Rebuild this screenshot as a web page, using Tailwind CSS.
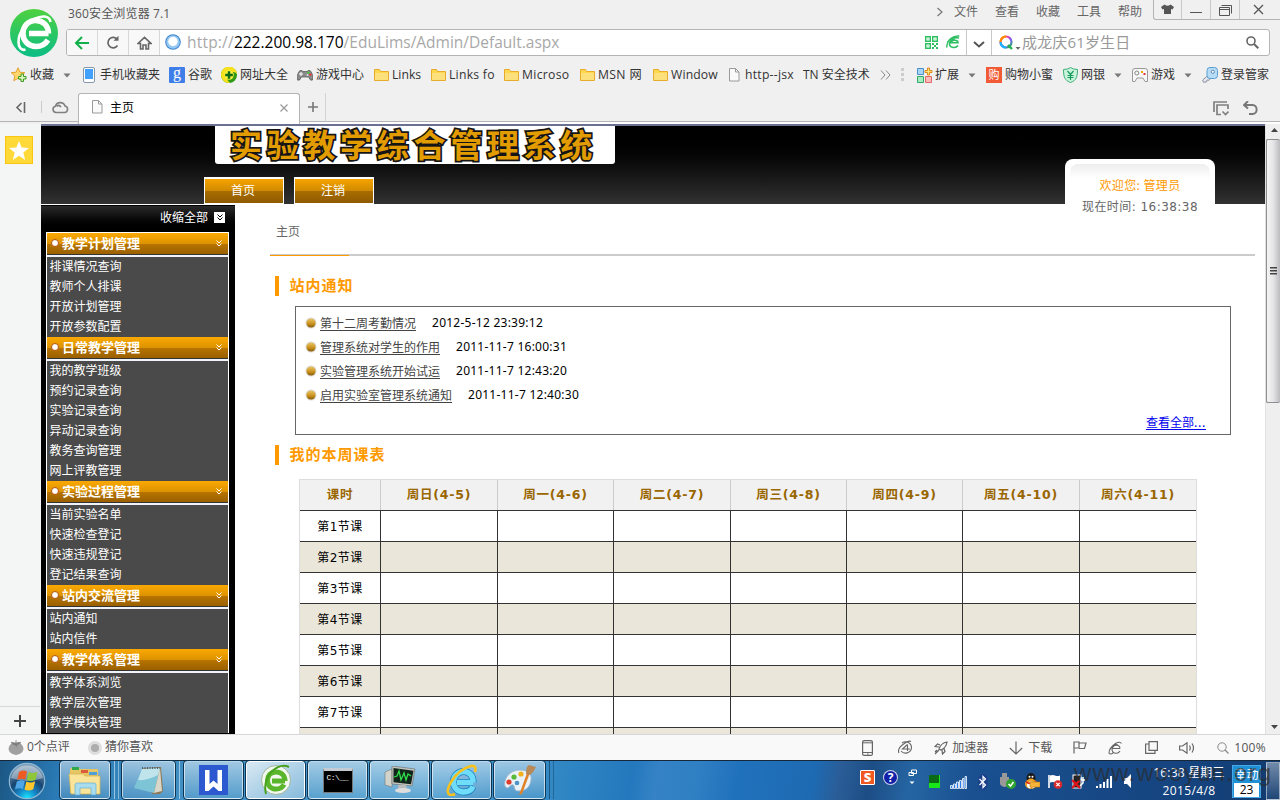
<!DOCTYPE html>
<html lang="zh-CN">
<head>
<meta charset="utf-8">
<title>主页</title>
<script src="https://cdn.jsdelivr.net/npm/@tailwindcss/browser@4"></script>
</head>
<body class="w-[1280px] h-[800px] overflow-hidden bg-[#f0f0f0] font-['Open_Sans','Noto_Sans_CJK_SC',sans-serif] text-[12px] leading-none text-[#333]">
<svg class="absolute w-0 h-0">
  <defs>
    <linearGradient id="gGreen" x1="0" y1="0" x2="0" y2="1"><stop offset="0" stop-color="#4ed13f"/><stop offset="1" stop-color="#0bbd86"/></linearGradient>
    <linearGradient id="gBall" x1="0" y1="0" x2="0" y2="1"><stop offset="0" stop-color="#e8c56c"/><stop offset=".5" stop-color="#d39a25"/><stop offset="1" stop-color="#8a5d08"/></linearGradient>
    <radialGradient id="gOrb" cx=".5" cy=".98" r=".9"><stop offset="0" stop-color="#19e8ff"/><stop offset=".3" stop-color="#1585c8"/><stop offset=".6" stop-color="#174470"/><stop offset="1" stop-color="#7f9fb8"/></radialGradient>
    <linearGradient id="gRainbow" x1="0" y1="0" x2="1" y2="1"><stop offset="0" stop-color="#f90"/><stop offset=".35" stop-color="#f33ca0"/><stop offset=".6" stop-color="#7a5cff"/><stop offset="1" stop-color="#22b14c"/></linearGradient>
    <symbol id="folder" viewBox="0 0 15 14"><path d="M.5 1.500h5l1 2h8v9h-14z" fill="#ffd84d" stroke="#e9ab2b"/><path d="M1 5h13v7H1z" fill="#fbe07c"/></symbol>
    <symbol id="page" viewBox="0 0 12 14"><path d="M1.500.5h6l3.500 3.500v9h-9.500z" fill="#fafafa" stroke="#9a9a9a"/><path d="M7.500.5v3.500h3.500" fill="none" stroke="#9a9a9a"/></symbol>
    <symbol id="caret" viewBox="0 0 8 5"><path d="M.5.5h7L4 4.500z" fill="#777"/></symbol>
    <symbol id="ball" viewBox="0 0 12 12"><circle cx="6" cy="6" r="5.500" fill="#d9d9d9"/><circle cx="6" cy="6" r="4.600" fill="url(#gBall)"/></symbol>
    <symbol id="dbl" viewBox="0 0 6 7"><path d="M.5.5L3 3 5.500.5M.5 3.500L3 6l2.500-2.500" fill="none" stroke="currentColor"/></symbol>
  </defs>
</svg>

<div class="flex flex-col w-[1280px] h-[800px]">
  <!-- browser chrome -->
  <header class="h-[93px] flex shrink-0">
    <div class="flex flex-col w-full">
      <div class="flex h-[57px]">
        <svg class="w-[48px] h-[48px] ml-[10px] mt-[9px] shrink-0" viewBox="0 0 48 48">
          <circle cx="24" cy="24" r="24" fill="url(#gGreen)"/>
          <path d="M38.500 24.500H19M38.500 24.500c0-8-5.500-13-13-13C18 11.500 13 17.500 13 24.500 13 32 18.500 37.500 26 37.500c5.500 0 9.500-2.500 12-6.500" fill="none" stroke="#fff" stroke-width="5.500"/>
          <path d="M40.500 13c-1-7-9-6.500-16.500-3C15 14.500 8.500 24 8.500 33c0 5 2.500 9 7 7.500" fill="none" stroke="#fff" stroke-width="2.600"/>
        </svg>
        <div class="ml-[8px] grow flex flex-col">
          <div class="flex h-[30px]">
            <span class="mt-[7px] ml-[2px] w-[200px] text-[#555] leading-[14px] tracking-[0.150px]">360安全浏览器 7.1</span>
            <div class="ml-auto flex">
              <svg class="w-[8px] h-[10px] mt-[7px] mr-[10px]" viewBox="0 0 8 10"><path d="M1.500 1L6 5 1.500 9" fill="none" stroke="#777" stroke-width="1.200"/></svg>
              <div class="flex gap-[17px] mt-[5px] text-[#666] leading-[14px]"><span>文件</span><span>查看</span><span>收藏</span><span>工具</span><span>帮助</span></div>
              <div class="ml-[11px] flex w-[127px] h-[20px] border-l border-b border-[#b4b4b4] rounded-bl-[3px]">
                <div class="w-[28px] border-r border-[#c8c8c8] flex justify-center"><svg class="w-[13px] h-[10px] mt-[4px]" viewBox="0 0 13 10"><path d="M3.500.5Q6.500 3 9.500.5L13 3l-1.500 2.500L10 5v5H3V5l-1.500.5L0 3z" fill="#555"/></svg></div>
                <div class="w-[29px] border-r border-[#c8c8c8] flex justify-center"><div class="w-[12px] h-[1px] mt-[12px] bg-[#555]"></div></div>
                <div class="w-[29px] border-r border-[#c8c8c8] flex justify-center"><svg class="w-[13px] h-[11px] mt-[5px]" viewBox="0 0 13 11"><path d="M2.500.5h10v8M.5 2.500h10v8H.5zM.5 4.500h10" fill="none" stroke="#555" stroke-width="1"/></svg></div>
                <svg class="w-[11px] h-[11px] mt-[4px] ml-[13px]" viewBox="0 0 11 11"><path d="M1 1l9 9M10 1l-9 9" stroke="#555" stroke-width="1.300"/></svg>
              </div>
            </div>
          </div>
          <div class="w-[1204px] h-[27px] mt-[-1px] flex border border-[#b4b4b4] rounded-[3px] bg-white overflow-hidden shrink-0">
            <div class="w-[31px] bg-[#f8f8f8] border-r border-[#d8d8d8] flex items-center justify-center"><svg class="w-[16px] h-[14px]" viewBox="0 0 16 14"><path d="M15 7H2M8 1L2 7l6 6" fill="none" stroke="#12b04a" stroke-width="2"/></svg></div>
            <div class="w-[31px] bg-[#f8f8f8] border-r border-[#d8d8d8] flex items-center justify-center"><svg class="w-[14px] h-[15px]" viewBox="0 0 14 15"><path d="M11.500 10.500A5.200 5.200 0 1 1 11.300 4.500" fill="none" stroke="#666" stroke-width="1.700"/><path d="M12.500.8v5H7.500z" fill="#666"/></svg></div>
            <div class="w-[31px] bg-[#f8f8f8] border-r border-[#d8d8d8] flex items-center justify-center"><svg class="w-[15px] h-[14px]" viewBox="0 0 15 14"><path d="M1 7.500L7.500 1.300 14 7.500h-2.500V13H9V9H6v4H3.500V7.500z" fill="none" stroke="#666" stroke-width="1.600"/></svg></div>
            <svg class="w-[16px] h-[16px] ml-[5px] mt-[4px] shrink-0" viewBox="0 0 16 16"><circle cx="8" cy="8" r="7.800" fill="#3f83cf"/><circle cx="8" cy="8" r="6.800" fill="#93c8f2"/><circle cx="8" cy="7.500" r="4.700" fill="#fff"/></svg>
            <div class="ml-[6px] w-[738px] leading-[25px] text-[15.500px] text-[#a8a8a8] whitespace-nowrap"><span class="tracking-[0.200px]">http://</span><span class="text-black">222.200.98.170</span><span>/EduLims/Admin/Default.aspx</span></div>
            <svg class="w-[13px] h-[13px] mt-[6px] shrink-0" viewBox="0 0 13 13"><path d="M.7.7h4.600v4.600H.7zM7.700.7h4.600v4.600H7.700zM.7 7.700h4.600v4.600H.7z" fill="none" stroke="#2ebf62" stroke-width="1.400"/><path d="M2.500 2.500h1v1h-1zM9.500 2.500h1v1h-1zM2.500 9.500h1v1h-1zM7 7h2v2H7zM11 7h2v2h-2zM9 9h2v2H9zM7 11h2v2H7zM11 11h2v2h-2z" fill="#2ebf62"/></svg>
            <svg class="w-[14px] h-[14px] mt-[5px] ml-[8px] shrink-0" viewBox="0 0 14 14"><path d="M12 7.700H5c.5-3.200 7-3.500 7 0zM12 10.500c-2 3-8 2.500-8.500-1C3 6 6 4.500 8.500 4.500" fill="none" stroke="#2ebf62" stroke-width="1.600"/><path d="M13.300 1C7 .5 1 4.500.7 12.500M13 3C9 2 4 3.500 1.500 7" fill="none" stroke="#2ebf62" stroke-width="1.400"/></svg>
            <div class="ml-[6px] w-[26px] border-x border-[#c8c8c8] flex items-center justify-center shrink-0"><svg class="w-[12px] h-[7px] mt-[3px]" viewBox="0 0 12 7"><path d="M1 1l5 4.500L11 1" fill="none" stroke="#555" stroke-width="2"/></svg></div>
            <svg class="w-[24px] h-[16px] ml-[6px] mt-[5px] shrink-0" viewBox="0 0 24 16"><circle cx="8" cy="7" r="5.500" fill="none" stroke="url(#gRainbow)" stroke-width="2.200"/><path d="M2.500 7A5.500 5.500 0 0 0 8 12.500" fill="none" stroke="#18b4ff" stroke-width="2.200"/><path d="M2.500 7A5.500 5.500 0 0 1 8 1.500" fill="none" stroke="#ff8a00" stroke-width="2.200"/><path d="M10 10l4 4" stroke="#22b14c" stroke-width="2.400"/><path d="M17.500 12h5L20 14.800z" fill="#666"/></svg>
            <span class="text-[15px] leading-[25px] text-[#999] w-[224px] tracking-[0.150px]">成龙庆61岁生日</span>
            <svg class="w-[13px] h-[13px] mt-[6px] shrink-0" viewBox="0 0 13 13"><circle cx="5" cy="5" r="4" fill="none" stroke="#666" stroke-width="1.600"/><path d="M8 8l4.300 4.300" stroke="#666" stroke-width="2"/></svg>
          </div>
        </div>
      </div>
      <!-- bookmarks bar -->
      <nav class="flex h-[36px] items-center pl-[11px] whitespace-nowrap text-[12px] text-[#333]">
        <div class="flex items-center w-[56px] gap-[3px]"><svg class="w-[16px] h-[16px]" viewBox="0 0 16 16"><path d="M7 .8l2 4.400 4.800.5-3.600 3.200 1 4.800L7 11.300l-4.200 2.400 1-4.800L.3 5.700l4.800-.5z" fill="#ffd76a" stroke="#e5a02c"/><path d="M10 7h2.500v2.500H15V12h-2.500v2.500H10V12H7.500V9.500H10z" fill="#d8f5c0" stroke="#3c9a1c"/></svg>收藏</div>
        <svg class="w-[8px] h-[5px] mr-[8px] ml-[-4px]"><use href="#caret"/></svg><span class="w-[4px]"></span>
        <div class="flex items-center w-[86px] gap-[5px]"><svg class="w-[12px] h-[16px]" viewBox="0 0 12 16"><rect x=".5" y=".5" width="11" height="15" rx="1.500" fill="#fff" stroke="#8597aa"/><path d="M2 2h8v10H2z" fill="#42a1ff"/></svg>手机收藏夹</div>
        <div class="flex items-center w-[52px] gap-[3px]"><div class="w-[16px] h-[16px] rounded-[1px] bg-[#3f7ee8] text-white text-center text-[16px] leading-[12px] font-['Liberation_Serif',serif]">g</div>谷歌</div>
        <div class="flex items-center w-[76px] gap-[3px]"><svg class="w-[16px] h-[16px]" viewBox="0 0 16 16"><circle cx="8" cy="8" r="8" fill="#2f9a14"/><path d="M0 8a8 8 0 0 1 16-1c-3-3-8-3-10 0s1 7 3 9A8 8 0 0 1 0 8z" fill="#f6e11b"/><circle cx="8" cy="8" r="4.800" fill="#f6ec3b"/><path d="M8 4.200v7.600M4.200 8h7.600" stroke="#0c6b13" stroke-width="2.400"/></svg>网址大全</div>
        <div class="flex items-center w-[77px] gap-[3px]"><svg class="w-[16px] h-[12px]" viewBox="0 0 16 12"><path d="M2 2.500Q4 0 6 2.500h4Q12 0 14 2.500 17 8 15.500 11q-2 1.500-4-3h-7q-2 4.500-4 3Q-1 8 2 2.500z" fill="#8a8a8a" stroke="#555" stroke-width=".7"/><path d="M4 3v4M2 5h4" stroke="#fff"/><circle cx="11.500" cy="3.800" r="1.200" fill="#4c4"/><circle cx="13.300" cy="5.600" r="1.200" fill="#e33"/><circle cx="10.500" cy="6" r="1" fill="#ddd"/></svg>游戏中心</div>
        <div class="flex items-center w-[57px] gap-[3px] text-[12.200px]"><svg class="w-[15px] h-[14px]"><use href="#folder"/></svg>Links</div>
        <div class="flex items-center w-[73px] gap-[3px] text-[12.200px]"><svg class="w-[15px] h-[14px]"><use href="#folder"/></svg><span class="tracking-[0.250px]">Links fo</span></div>
        <div class="flex items-center w-[76px] gap-[3px] text-[12.200px]"><svg class="w-[15px] h-[14px]"><use href="#folder"/></svg><span class="tracking-[0.300px]">Microso</span></div>
        <div class="flex items-center w-[73px] gap-[3px] text-[12.200px]"><svg class="w-[15px] h-[14px]"><use href="#folder"/></svg><span class="tracking-[0.350px]">MSN 网</span></div>
        <div class="flex items-center w-[75px] gap-[3px] text-[12.200px]"><svg class="w-[15px] h-[14px]"><use href="#folder"/></svg><span class="tracking-[0.150px]">Window</span></div>
        <div class="flex items-center w-[75px] gap-[5px] text-[12.200px]"><svg class="w-[12px] h-[14px]"><use href="#page"/></svg><span class="tracking-[0.250px]">http--jsx</span></div>
        <div class="w-[77px]">TN 安全技术</div>
        <svg class="w-[11px] h-[10px] mr-[10px]" viewBox="0 0 11 10"><path d="M1 .5L5 5 1 9.500M6 .5L10 5 6 9.500" fill="none" stroke="#888"/></svg>
        <svg class="w-[3px] h-[14px] mr-[13px]" viewBox="0 0 3 14"><path d="M0 0h3v3H0zM0 5h3v3H0zM0 10h3v3H0z" fill="#ccc"/></svg>
        <div class="flex items-center w-[51px] gap-[2px]"><svg class="w-[16px] h-[16px]" viewBox="0 0 16 16"><path d="M.5 1.500h6v6h-6z" fill="#a8d4f8" stroke="#4b90c8"/><path d="M.5 9.500h6v6h-6z" fill="#a5ecc0" stroke="#35a86a"/><path d="M8.500 9.500h6v6h-6z" fill="#fbb9b9" stroke="#dd6b6b"/><path d="M10.500 1h2v2.500H15v2h-2.500V8h-2V5.500H8v-2h2.500z" fill="#ffe27a" stroke="#e08a1c"/></svg>扩展</div>
        <svg class="w-[8px] h-[5px] mr-[10px]"><use href="#caret"/></svg>
        <div class="flex items-center w-[77px] gap-[3px]"><div class="w-[16px] h-[16px] bg-[#f05a35] text-white text-[11px] leading-[16px] text-center">购</div>购物小蜜</div>
        <div class="flex items-center w-[51px] gap-[3px]"><svg class="w-[15px] h-[16px]" viewBox="0 0 15 16"><path d="M7.500.5Q10 2.500 14.500 2.500c0 7-1 11-7 13-6-2-7-6-7-13Q5 2.500 7.500.5z" fill="#c8f3dc" stroke="#3fae78"/><path d="M4.500 4l3 3.500 3-3.500M7.500 7.500V13M4.500 8.500h6M4.500 10.500h6" fill="none" stroke="#189a5a" stroke-width="1.200"/></svg>网银</div>
        <svg class="w-[8px] h-[5px] mr-[10px]"><use href="#caret"/></svg>
        <div class="flex items-center w-[52px] gap-[3px]"><svg class="w-[16px] h-[14px]" viewBox="0 0 16 14"><path d="M3 .5h10a2.500 2.500 0 0 1 2.500 2.500v10.500H13L11 10H5l-2 3.500H.5V3A2.500 2.500 0 0 1 3 .5z" fill="#f7f7f7" stroke="#999"/><circle cx="4.800" cy="5" r="2" fill="none" stroke="#888"/><path d="M9 3h2v2H9z" fill="#f5a300"/><path d="M11.500 5h2v2h-2z" fill="#d33"/></svg>游戏</div>
        <svg class="w-[8px] h-[5px] mr-[10px]"><use href="#caret"/></svg>
        <div class="flex items-center gap-[3px]"><svg class="w-[16px] h-[16px]" viewBox="0 0 16 16"><path d="M6 8.500L.7 13l.8 2.300 3-.3L5 13l2 .3L9 11" fill="#e5e8ee" stroke="#8b93a3"/><rect x="5" y=".5" width="10.500" height="11" rx="3" fill="#b6dcf8" stroke="#5b9fd0"/><circle cx="10.800" cy="4.800" r="1.600" fill="#fff" stroke="#5b88b0"/></svg>登录管家</div>
      </nav>
    </div>
  </header>
  <!-- tab strip -->
  <div class="flex h-[31px] shrink-0">
    <div class="w-[78px] h-[29px] border-b border-[#b4b4b4] flex items-center">
      <svg class="w-[11px] h-[11px] ml-[15px] mt-[1px]" viewBox="0 0 11 11"><path d="M6.500 1L2 5.500 6.500 10M9.500 0v11" fill="none" stroke="#666" stroke-width="1.600"/></svg>
      <div class="w-px h-[12px] bg-[#ccc] ml-[15px]"></div>
      <svg class="w-[17px] h-[14px] ml-[10px]" viewBox="0 0 17 14"><path d="M4 12.500a3.200 3.200 0 0 1-.5-6.300A5 5 0 0 1 13 6a3.300 3.300 0 0 1-.5 6.500zM5 6.500Q6.500 4 9 7" fill="none" stroke="#808080" stroke-width="1.600"/></svg>
    </div>
    <div class="w-[222px] h-[31px] bg-white border border-b-0 border-[#b4b4b4] rounded-t-[3px] flex pt-[6px]">
      <svg class="w-[12px] h-[14px] ml-[12px]"><use href="#page"/></svg>
      <span class="ml-[7px] w-[170px] leading-[15px] text-black">主页</span>
      <svg class="w-[8px] h-[8px] mt-[4px]" viewBox="0 0 8 8"><path d="M.5.5l7 7M7.500.5l-7 7" stroke="#999" stroke-width="1.200"/></svg>
    </div>
    <div class="w-[26px] h-[31px] bg-white"><div class="h-[29px] bg-[#f0f0f0] border-b border-[#b4b4b4] border-r border-r-[#d4d4d4]"><svg class="w-[10px] h-[29px] ml-[8px]" viewBox="0 0 10 29"><path d="M5 9v10M0 14h10" stroke="#777" stroke-width="1.600"/></svg></div></div>
    <div class="grow h-[31px] bg-white"><div class="h-[29px] bg-[#f0f0f0] border-b border-[#b4b4b4] flex justify-end pr-[22px] pt-[8px] gap-[14px]">
      <svg class="w-[16px] h-[15px]" viewBox="0 0 16 15"><path d="M1 11V1h13M8 13.500H4V4h11v4M9.500 10.500l3 3 3-3" fill="none" stroke="#808080" stroke-width="1.700"/></svg>
      <svg class="w-[15px] h-[14px]" viewBox="0 0 15 14"><path d="M1 4h8.500c5.500 0 5.500 9 0 9H6M5 0L1 4l4 3.500" fill="none" stroke="#777" stroke-width="1.900"/></svg>
    </div></div>
  </div>

  <!-- viewport -->
  <div class="flex h-[610px] shrink-0 bg-white overflow-hidden">
    <aside class="w-[41px] bg-[#f4f6f5] flex flex-col justify-between">
      <div class="w-[28px] h-[28px] ml-[5px] mt-[12px] bg-[#ffd938] border border-[#fcc512] flex items-center justify-center"><svg class="w-[20px] h-[19px]" viewBox="0 0 20 19"><path d="M10 0l2.600 6.600 7.400.4-5.700 4.600L16.200 19 10 14.700 3.800 19l1.900-7.400L0 7l7.400-.4z" fill="#fff"/></svg></div>
      <div class="h-[28px] w-[40px] border-t border-[#d8d8d8] flex justify-center items-center"><svg class="w-[12px] h-[12px]" viewBox="0 0 12 12"><path d="M6 0v12M0 6h12" stroke="#444" stroke-width="2"/></svg></div>
    </aside>
    <main class="w-[1224px] font-['Noto_Sans_CJK_SC',sans-serif]">
      <!-- site header -->
      <div class="h-[80px] border-t-2 border-[#6a7191] bg-linear-to-b from-black to-[#323232] flex justify-between">
        <div class="ml-[163px] flex flex-col justify-between">
          <div class="ml-[11px] w-[400px] h-[38px] bg-white rounded-b-[3px] pl-[15px] text-[32px] leading-[35px] font-bold tracking-[4.700px] text-[#e29c00] whitespace-nowrap [-webkit-text-stroke:3.500px_#151515] [paint-order:stroke_fill]">实验教学综合管理系统</div>
          <div class="flex gap-[10px] text-white text-center">
            <div class="w-[80px] h-[27px] border border-white border-t-2 bg-[linear-gradient(#f6a300,#cf8a00_50%,#a86c00_52%,#8f5b00)] leading-[22px] pr-[2px]">首页</div>
            <div class="w-[80px] h-[27px] border border-white border-t-2 bg-[linear-gradient(#f6a300,#cf8a00_50%,#a86c00_52%,#8f5b00)] leading-[22px] pr-[2px]">注销</div>
          </div>
        </div>
        <div class="mr-[50px] mt-[33px] w-[150px] h-[62px] relative bg-white rounded-t-[8px] pt-[5px] px-[5px]">
          <div class="h-[14px] rounded-t-[8px] bg-linear-to-b from-[#eeeeee] to-white"></div>
          <div class="text-center text-[#f90] leading-[14px] tracking-[0.400px]">欢迎您: 管理员</div>
          <div class="text-center text-[#666] leading-[14px] mt-[8px] mx-[-5px] tracking-[0.450px] font-['DejaVu_Sans','Noto_Sans_CJK_SC',sans-serif]">现在时间: 16:38:38</div>
        </div>
      </div>
      <div class="flex">
        <!-- side menu -->
        <div class="w-[194px] h-[529px] mt-px bg-black px-[5px] shrink-0 overflow-hidden">
          <div class="h-[27px] mx-[-5px] px-[10px] bg-linear-to-b from-[#2a2a2a] to-black border-t border-black flex justify-end text-white leading-[22px] gap-[6px]">收缩全部<span class="w-[11px] h-[11px] mt-[6px] bg-white text-black flex items-center justify-center"><svg class="w-[6px] h-[7px]"><use href="#dbl"/></svg></span></div>
          <div id="menu" class="border-x border-t border-white w-[183px]"></div>
        </div>
        <!-- content -->
        <div class="w-[1030px] pl-[35px]">
          <div class="h-[50px] pt-[19px] pl-[6px] leading-[15px] text-[#666]">主页</div>
          <div class="w-[985px] h-[2px] bg-[#ccc] flex items-end"><div class="w-[79px] h-px bg-[#f90]"></div></div>
          <h2 class="mt-[20px] ml-[5px] h-[20px] border-l-4 border-[#f90] pl-[10.500px] text-[15px] leading-[18px] font-bold text-[#f90] tracking-[1px]">站内通知</h2>
          <div class="mt-[10px] ml-[25px] w-[936px] h-[129px] border border-[#666] pt-[4px] pl-[9px]">
            <ul id="notices"></ul>
            <div class="mt-[8px] pr-[24px] text-right leading-[14px]"><a class="text-[#0000ee] underline underline-offset-2">查看全部<span class="tracking-[0.700px]">...</span></a></div>
          </div>
          <h2 class="mt-[10px] ml-[5px] h-[20px] border-l-4 border-[#f90] pl-[10.500px] text-[15px] leading-[18px] font-bold text-[#f90] tracking-[1px]">我的本周课表</h2>
          <div id="timetable" class="mt-[14px] ml-[29px] w-[898px] border border-b-0 border-[#ddd]"></div>
        </div>
      </div>
    </main>
    <!-- scrollbar -->
    <div class="w-[15px] bg-[#efefef] border-l border-[#e2e2e2] flex flex-col items-center">
      <svg class="w-[7px] h-[4px] mt-[4px] mb-[7px] ml-[2px] shrink-0" viewBox="0 0 7 4"><path d="M0 4L3.500 0 7 4z" fill="#444"/></svg>
      <div class="w-[14px] h-[264px] rounded-[2px] border border-[#8e8f92] border-r-0 bg-linear-to-r from-[#f5f5f5] via-[#e4e4e6] to-[#bcbcc0] flex items-center justify-center shrink-0"><svg class="w-[7px] h-[8px]" viewBox="0 0 7 8"><path d="M0 .8h7M0 3.800h7M0 6.800h7" stroke="#444" stroke-width="1.400"/></svg></div>
      <svg class="w-[7px] h-[4px] mt-auto mb-[5px] ml-[2px] shrink-0" viewBox="0 0 7 4"><path d="M0 0h7L3.500 4z" fill="#444"/></svg>
    </div>
  </div>

  <!-- status bar -->
  <div class="h-[26px] shrink-0 border-t border-[#d8d8d8] bg-[#f9f9f9] flex items-center text-[#555] leading-[14px]">
    <svg class="w-[16px] h-[15px] ml-[8px]" viewBox="0 0 16 15"><ellipse cx="8" cy="8.700" rx="7.500" ry="6.200" fill="#a0a0a0"/><path d="M8 0v3M3 2.500q3 0 5 1 2-1.500 5-1-2 1.800-4 2L8.500 6.500 7 4.700Q4.500 4.500 3 2.500z" fill="#7d7d7d" stroke="#7d7d7d" stroke-width=".8"/></svg>
    <span class="ml-[3px] w-[61px] mt-[-1px]">0个点评</span>
    <div class="w-[14px] h-[14px] rounded-full bg-[#adadad] border-[3px] border-[#dedede]"></div>
    <span class="ml-[3px] mt-[-2px]">猜你喜欢</span>
    <div class="ml-auto flex items-center pr-[14px]">
      <svg class="w-[11px] h-[16px] mr-[25px]" viewBox="0 0 11 16"><rect x=".6" y=".6" width="9.800" height="14.800" rx="1.500" fill="none" stroke="#666" stroke-width="1.200"/><path d="M1 2.800h9M1 12.500h9M5 14h1.500" stroke="#666"/></svg>
      <svg class="w-[15px] h-[15px] mr-[21px]" viewBox="0 0 15 15"><path d="M4 3A6 6 0 0 1 13.500 8 6 6 0 0 1 3 11M1 13Q-1 9 5 4.500T13 1.500M9.500 4.500v6.500M9.500 4.500L4.500 9H12" fill="none" stroke="#666" stroke-width="1.100"/></svg>
      <svg class="w-[14px] h-[14px] mr-[4px]" viewBox="0 0 14 14"><path d="M5 8Q7 2 13 1q-1 6-6 8zM5 6L1 5.500 3.500 3 6 4M8 9l.5 4 2.500-2.500L10 7.500M5 9l-4 4M3 9l-2 2" fill="none" stroke="#666" stroke-width="1.200"/></svg>
      <span class="w-[57px]">加速器</span>
      <svg class="w-[14px] h-[14px] mr-[5px]" viewBox="0 0 14 14"><path d="M7 .5V13M.8 7L7 13l6.200-6" fill="none" stroke="#666" stroke-width="1.200"/></svg>
      <span class="w-[45px]">下载</span>
      <svg class="w-[14px] h-[13px] mr-[21px]" viewBox="0 0 14 13"><path d="M1 12.500V1h5v6H1M6 2h7l-1.500 5.500H6" fill="none" stroke="#666" stroke-width="1.200"/></svg>
      <svg class="w-[15px] h-[14px] mr-[22px]" viewBox="0 0 15 14"><path d="M12 7.500H4.500C5 3.500 12 3 12 7.500M12 10c-2 3.500-8 3-8-2C4 4 8 3 10 4M13.500 2.500Q12 0 7.500 2.500 1 7 1 12q1.500 2 4 0" fill="none" stroke="#666" stroke-width="1.100"/></svg>
      <svg class="w-[13px] h-[13px] mr-[21px]" viewBox="0 0 13 13"><path d="M4 .6h8.400v8.800H4zM4 3H.6v9.400H10V9.500" fill="none" stroke="#666" stroke-width="1.200"/></svg>
      <svg class="w-[16px] h-[12px] mr-[22px]" viewBox="0 0 16 12"><path d="M.6 4h3L8 .8v10.400L3.600 8h-3zM10.500 3.500q1.500 2.500 0 5M13 1.500q3 4.500 0 9" fill="none" stroke="#666" stroke-width="1.200"/></svg>
      <svg class="w-[12px] h-[12px] mr-[5px]" viewBox="0 0 12 12"><circle cx="5" cy="5" r="4.200" fill="none" stroke="#888"/><path d="M8 8l3.500 3.500" stroke="#888" stroke-width="1.200"/></svg>
      <span class="tracking-[0.300px]">100%</span>
    </div>
  </div>

  <!-- taskbar -->
  <footer class="h-[40px] shrink-0 relative border-t border-[#16283a] bg-[linear-gradient(100deg,#1b5784_0px,#2a7ab5_60px,#3f8fc4_180px,#4b9cce_420px,#2f86c3_560px,#2478bd_625px,#3583c6_650px,#2f7fc3_690px,#2071bc_730px,#1e6ab2_805px,#2a5d97_830px,#1d4d85_860px,#2565a3_900px,#1a5090_960px,#15437e_1180px,#123a6b_1280px)] flex items-start">
    <svg class="w-[38px] h-[38px] ml-[8px] mt-px shrink-0" viewBox="0 0 38 38"><circle cx="19" cy="19" r="17.700" fill="url(#gOrb)" stroke="#8fb8d4" stroke-width="1.200"/><path d="M3 16a16.500 16.500 0 0 1 32 0Q19 22 3 16z" fill="#fff" opacity=".38"/><path d="M11 10q4-2.500 8-.5l-1.800 8q-4-1.700-8 .6z" fill="#ee5b22"/><path d="M20.500 10q4 2 9-.3l-1.900 8q-4.500 2.300-8.900.3z" fill="#8fc73a"/><path d="M8.800 19.500q4-2.300 8-.5L15 27q-4-1.800-8 .5z" fill="#4ea6e6"/><path d="M18.300 19.500q4.400 2 8.900-.3l-1.900 8q-4.400 2.300-8.800.3z" fill="#fcc62c"/></svg>
    <div class="ml-[14px] flex">
      <div class="flex w-[62px]"><div class="w-[50px] h-[38px] rounded-[3px] border border-white/60 outline outline-[#0d3553] bg-linear-to-b from-white/50 to-white/10 flex items-center justify-center"><svg class="w-[34px] h-[32px]" viewBox="0 0 34 32"><path d="M2 5l3-2h6l1 2h18v24H2z" fill="#e6c665"/><path d="M4 3h7v3H4z" fill="#2fa84e"/><path d="M13 6h7v3h-7z" fill="#dc5b3b"/><path d="M21 8h8v3h-8z" fill="#4c9fd8"/><path d="M1 10h14l2 2h15v18H3z" fill="#f9e49a" stroke="#d5b14c" stroke-width=".7"/><path d="M7 31V21q0-2 2-2h17q2 0 2 2v10h-5v-7H12v7z" fill="#a5dcf2" opacity=".95" stroke="#62aed6" stroke-width=".7"/></svg></div><div class="w-[4px] h-[38px] border-r border-white/50 ml-px"></div><div class="w-[3px] h-[38px] border-r border-white/40 ml-px"></div></div>
      <div class="flex w-[62px]"><div class="w-[53px] h-[38px] rounded-[3px] border border-white/60 outline outline-[#0d3553] bg-linear-to-b from-white/50 to-white/10 flex items-center justify-center"><svg class="w-[32px] h-[30px]" viewBox="0 0 32 30"><path d="M10 3l18-1 2 24-3 3H19z" fill="#8d7853"/><path d="M9 4l18-1-6 25L1 23z" fill="#7cc4d6"/><path d="M9 4l18-1-2 7Q14 16 5 15z" fill="#bfe4ec"/><path d="M27 3l2 23-8 2z" fill="#d9d7c9"/><path d="M9 3h18" stroke="#4f5f65" stroke-width="2" stroke-dasharray="1 1.500"/></svg></div><div class="w-[4px] h-[38px] border-r border-white/50 ml-px"></div></div>
      <div class="w-[62px]"><div class="w-[59px] h-[38px] rounded-[3px] border border-white/60 outline outline-[#0d3553] bg-linear-to-b from-white/50 to-white/10 flex items-center justify-center"><svg class="w-[29px] h-[30px]" viewBox="0 0 29 30"><path d="M0 0h29v30H0z" fill="#2c59cf"/><path d="M6 5h4.500v14l4-3.500 4 3.500V5H23v21h-3.500l-5-4.500-5 4.500H6z" fill="#fff"/></svg></div></div>
      <div class="w-[62px]"><div class="w-[59px] h-[38px] rounded-[3px] border border-white outline outline-[#0d3553] bg-linear-to-br from-white/80 to-white/35 flex items-center justify-center"><svg class="w-[30px] h-[32px]" viewBox="0 0 30 32"><circle cx="15" cy="16" r="14.500" fill="#f2f8f0" stroke="#9fb89a"/><path d="M24 17H11M24 17c0-6-4-9-9-9-5.500 0-8.500 4-8.500 8.500 0 5 3.500 8.500 8.500 8.500 4 0 6.500-1.500 8-4.500" fill="none" stroke="#59b52b" stroke-width="5"/><path d="M28 3Q20-1 10 8 2 18 5 30" fill="none" stroke="#47a21f" stroke-width="2"/></svg></div></div>
      <div class="w-[62px]"><div class="w-[59px] h-[38px] rounded-[3px] border border-white/60 outline outline-[#0d3553] bg-linear-to-b from-white/50 to-white/10 flex items-center justify-center"><div class="w-[30px] h-[25px] border border-[#777] border-t-[3px] border-t-[#c5cbd2] bg-black text-white font-['Liberation_Mono',monospace] text-[8px] leading-[12px] pl-[3px] pt-px tracking-[-0.500px] whitespace-nowrap">C:\__</div></div></div>
      <div class="w-[62px]"><div class="w-[59px] h-[38px] rounded-[3px] border border-white/60 outline outline-[#0d3553] bg-linear-to-b from-white/50 to-white/10 flex items-center justify-center"><svg class="w-[32px] h-[28px]" viewBox="0 0 32 28"><path d="M1 6l7-3v18l-7-2z" fill="#d2d4cc" stroke="#777" stroke-width=".6"/><path d="M8 0l23 3-3 17L8 18z" fill="#c4c7c0" stroke="#666" stroke-width=".6"/><path d="M9.500 2l20 2.700-2.500 13.500L9.500 16.300z" fill="#12251a"/><path d="M10 11l3-1 2-5 2 9 3-7 2 7 2-6 3 2" fill="none" stroke="#2fe04a" stroke-width="1.300"/><path d="M14 19h8l1 4h-9z" fill="#bbb"/><ellipse cx="19" cy="24.500" rx="8" ry="2.500" fill="#ddd"/></svg></div></div>
      <div class="w-[62px]"><div class="w-[59px] h-[38px] rounded-[3px] border border-white/60 outline outline-[#0d3553] bg-linear-to-b from-white/50 to-white/10 flex items-center justify-center"><svg class="w-[32px] h-[32px]" viewBox="0 0 32 32"><path d="M27 18.500H11M27 18.500c.5-7-4-11-9.500-11S7.500 12 7.500 18c0 5.500 4 10 10 10 4.500 0 8-2 9.500-5.500" fill="none" stroke="#1c7fc0" stroke-width="7"/><path d="M27 18.500H11M27 18.500c.5-7-4-11-9.500-11S7.500 12 7.500 18c0 5.500 4 10 10 10 4.500 0 8-2 9.500-5.500" fill="none" stroke="#6fdcfa" stroke-width="5.500"/><path d="M29 8Q31 1 25 2 13 5 5 18-1 29 4 31q2 .5 5-1" fill="none" stroke="#f7c21d" stroke-width="2.600"/></svg></div></div>
      <div class="flex w-[62px]"><div class="w-[51px] h-[38px] rounded-[3px] border border-white/60 outline outline-[#0d3553] bg-linear-to-b from-white/50 to-white/10 flex items-center justify-center"><svg class="w-[32px] h-[32px]" viewBox="0 0 32 32"><path d="M16 6c8 0 12 4 11 10-1 8-6 11-13 11-3 0-3-2-4-5s-4 0-6 2c-3 0-4-3-3-7C3 10 9 6 16 6z" fill="#e9f2f9" stroke="#9fb9cc"/><circle cx="5" cy="18" r="2.600" fill="#e13b2b"/><circle cx="10" cy="13" r="2.600" fill="#57b83a"/><circle cx="17" cy="10" r="2.600" fill="#f3b21c"/><circle cx="13" cy="19" r="2.300" fill="#4b93c4"/><path d="M15 31l8-22 2.500 1L18 30z" fill="#e28228"/><path d="M22 10Q22 2 25 1l7 2q-2 5-6 8z" fill="#b98a58"/></svg></div><div class="w-[4px] h-[38px] border-r border-[#0d3553]/60 ml-px"></div><div class="w-[4px] h-[38px] border-r border-[#0d3553]/40"></div></div>
    </div>
    <!-- notification area -->
    <div class="ml-auto flex items-center h-[39px] text-white">
      <div class="w-[15px] h-[15px] rounded-[1px] bg-[#f05a22] border border-white text-center font-black text-[13px] leading-[13px] mt-[-7px] mr-[8px]">S</div>
      <div class="w-[15px] h-[15px] rounded-full bg-[#1220a8] border border-white/80 text-center font-bold text-[12px] leading-[13px] mt-[-7px] mr-[10px]">?</div>
      <svg class="w-[9px] h-[17px] mt-[-7px] mr-[12px]" viewBox="0 0 9 17"><path d="M3.500 1h5v3.500h-5zM1 3.500h4.500V6.500H1z" fill="none" stroke="#fff"/><path d="M1.500 12.500h5L4 15z" fill="#fff"/></svg>
      <svg class="w-[11px] h-[13px] mt-[1px] mr-[10px]" viewBox="0 0 11 13"><path d="M0 0h11v13H0z" fill="#18e818"/><path d="M0 0h10v8H0z" fill="#0a6b14"/></svg>
      <svg class="w-[17px] h-[13px] mt-[3px] mr-[11px]" viewBox="0 0 17 13"><path d="M.5 9.500h2v3h-2zM3.500 8h2v4.500h-2zM6.500 6h2v6.500h-2zM9.500 4.500h2v8h-2zM12.500 2.500H14v10h-1.500zM15 .5h1.500v12H15z" fill="#2a7de8" stroke="#fff" stroke-width=".8"/></svg>
      <svg class="w-[10px] h-[16px] mt-[2px] mr-[12px]" viewBox="0 0 10 16"><ellipse cx="5" cy="8" rx="5" ry="8" fill="#1b3f8a"/><path d="M1.500 5l6 6L5 13.500v-11L7.500 5l-6 6" fill="none" stroke="#fff" stroke-width="1.200"/></svg>
      <svg class="w-[16px] h-[16px] mt-[1px] mr-[8px]" viewBox="0 0 16 16"><path d="M2 0h5v4H2zM0 4h9v6q0 3-4.500 4Q0 13 0 10z" fill="#999"/><circle cx="11" cy="11" r="5" fill="#2ea52e"/><path d="M8.500 11l2 2 3-4" fill="none" stroke="#fff" stroke-width="1.500"/></svg>
      <svg class="w-[16px] h-[16px] mt-[1px] mr-[8px]" viewBox="0 0 16 16"><ellipse cx="7" cy="5" rx="4.500" ry="5" fill="#1a1a1a"/><ellipse cx="7" cy="11" rx="6" ry="5" fill="#f0a020"/><ellipse cx="7" cy="12" rx="4" ry="3.500" fill="#fff"/><circle cx="5.500" cy="3.800" r="1" fill="#fff"/><circle cx="8.500" cy="3.800" r="1" fill="#fff"/><path d="M2 8q5 3 10 0v2q-5 2.500-10 0z" fill="#e02a1a"/><ellipse cx="7" cy="6.500" rx="2.500" ry="1" fill="#f7a51c"/><path d="M6 9h10v5H9l-2 2v-2H6z" fill="#f6b53a" stroke="#b87510" stroke-width=".6"/></svg>
      <svg class="w-[15px] h-[15px] mt-[2px] mr-[8px]" viewBox="0 0 15 15"><path d="M1 1v13" stroke="#fff" stroke-width="1.600"/><path d="M2 1.500q3-1 5 0t5 0v7q-3 1-5 0t-5 0z" fill="#fff"/><circle cx="10" cy="10.500" r="4.300" fill="#d92b2b"/><path d="M8.300 8.800l3.400 3.400M11.700 8.800l-3.400 3.400" stroke="#fff" stroke-width="1.200"/></svg>
      <svg class="w-[15px] h-[15px] mt-[2px] mr-[10px]" viewBox="0 0 15 15"><rect x="2" y="1" width="8" height="13" fill="#222" stroke="#fff"/><path d="M10 3v3h4M12 3v6l-3 3" stroke="#fff" stroke-width="1.500" fill="none"/><path d="M1 6l8 8M9 6l-8 8" stroke="#e5131a" stroke-width="2.200"/></svg>
      <svg class="w-[16px] h-[12px] mt-[3px] mr-[12px]" viewBox="0 0 16 12"><path d="M0 10h2v2H0zM3.500 8h2v4h-2zM7 6h2v6H7zM10.500 3h2v9h-2zM14 0h2v12h-2z" fill="#fff"/></svg>
      <svg class="w-[8px] h-[14px] mt-[1px] mr-[18px]" viewBox="0 0 8 14"><path d="M0 4h3l4-4v14L3 10H0z" fill="#fff"/></svg>
      <div class="w-[80px] text-center leading-[14px] whitespace-nowrap pr-[2px]"><div class="mt-[2px] tracking-[0.200px]">16:38 星期三</div><div class="mt-[4px] tracking-[0.400px]">2015/4/8</div></div>
      <div class="w-[29px] h-[33px] mr-[5px] ml-[2px] mt-[1px] bg-[#1f8fd6] border border-[#49a9e6] text-center text-[12px] leading-[17px]">幸动<div class="bg-white text-black h-[14px] leading-[14px] mx-px">23</div></div>
      <div class="w-[14px] h-[38px] border border-white/50 bg-linear-to-b from-white/40 to-white/5"></div>
    </div>
    <div class="absolute left-[1074px] top-[-3px] text-[24px] leading-[30px] text-[#2b2b2b]/70 font-['Liberation_Sans',sans-serif] tracking-[1.200px]">www.wooyun.org</div>
  </footer>
</div>

<script>
const menu = [
  ['教学计划管理', ['排课情况查询','教师个人排课','开放计划管理','开放参数配置']],
  ['日常教学管理', ['我的教学班级','预约记录查询','实验记录查询','异动记录查询','教务查询管理','网上评教管理']],
  ['实验过程管理', ['当前实验名单','快速检查登记','快速违规登记','登记结果查询']],
  ['站内交流管理', ['站内通知','站内信件']],
  ['教学体系管理', ['教学体系浏览','教学层次管理','教学模块管理']]
];
document.getElementById('menu').innerHTML = menu.map(([title, items]) => `
  <div class="h-[22px] border-b border-[#333] bg-[linear-gradient(#fba900,#dd9300_50%,#b87400_52%,#9a6000)] flex items-center text-white font-bold text-[13px]">
    <span class="w-[8px] h-[8px] ml-[4px] mr-[3px] mt-[-1px] rounded-full bg-white border border-[#b5500a]"></span><span class="mt-[-2px]">${title}</span>
    <svg class="w-[6px] h-[7px] ml-auto mr-[6px]"><use href="#dbl"/></svg>
  </div>
  <div class="h-[2px] bg-[#f0f4fa]"></div>
  <div class="bg-[#4a4a4a] text-white pl-[2.500px] leading-[20px]">${items.map(t => `<div class="h-[20px] leading-[18px]">${t}</div>`).join('')}</div>`).join('');

const notices = [
  ['第十二周考勤情况','2012-5-12 23:39:12'],
  ['管理系统对学生的作用','2011-11-7 16:00:31'],
  ['实验管理系统开始试运','2011-11-7 12:43:20'],
  ['启用实验室管理系统通知','2011-11-7 12:40:30']
];
document.getElementById('notices').innerHTML = notices.map(([t, d]) => `
  <li class="flex items-center h-[24px]"><svg class="w-[12px] h-[12px] mr-[3px]"><use href="#ball"/></svg><a class="underline underline-offset-2 text-[#444]">${t}</a><span class="ml-[16px] text-black font-['Noto_Sans',sans-serif] tracking-[0.250px]">${d}</span></li>`).join('');

const cols = 'grid grid-cols-[81px_117px_116px_117px_116px_116px_117px_116px]';
const days = ['课时','周日(4-5)','周一(4-6)','周二(4-7)','周三(4-8)','周四(4-9)','周五(4-10)','周六(4-11)'];
let html = `<div class="${cols} h-[31px] border-b border-[#333] bg-[#f1f1f1] text-[#960] font-bold text-[13px] leading-[29px] text-center font-['DejaVu_Sans','Noto_Sans_CJK_SC',sans-serif]">` +
  days.map(d => `<div class="border-r border-[#ccc] last:border-r-0"><span class="text-[12.500px] tracking-[0.800px]">${d}</span></div>`).join('') + '</div>';
for (let i = 1; i <= 8; i++) {
  html += `<div class="${cols} h-[31px] border-b border-[#333] leading-[32px] text-center text-black odd:bg-[#eae6da] even:bg-white">` +
    `<div class="h-[30px] border-r border-[#333] tracking-[0.500px] font-['DejaVu_Sans','Noto_Sans_CJK_SC',sans-serif]">第${i}节课</div>` +
    '<div class="border-r border-[#333] last:border-r-0"></div>'.repeat(7) + '</div>';
}
document.getElementById('timetable').innerHTML = html;
</script>
</body>
</html>
